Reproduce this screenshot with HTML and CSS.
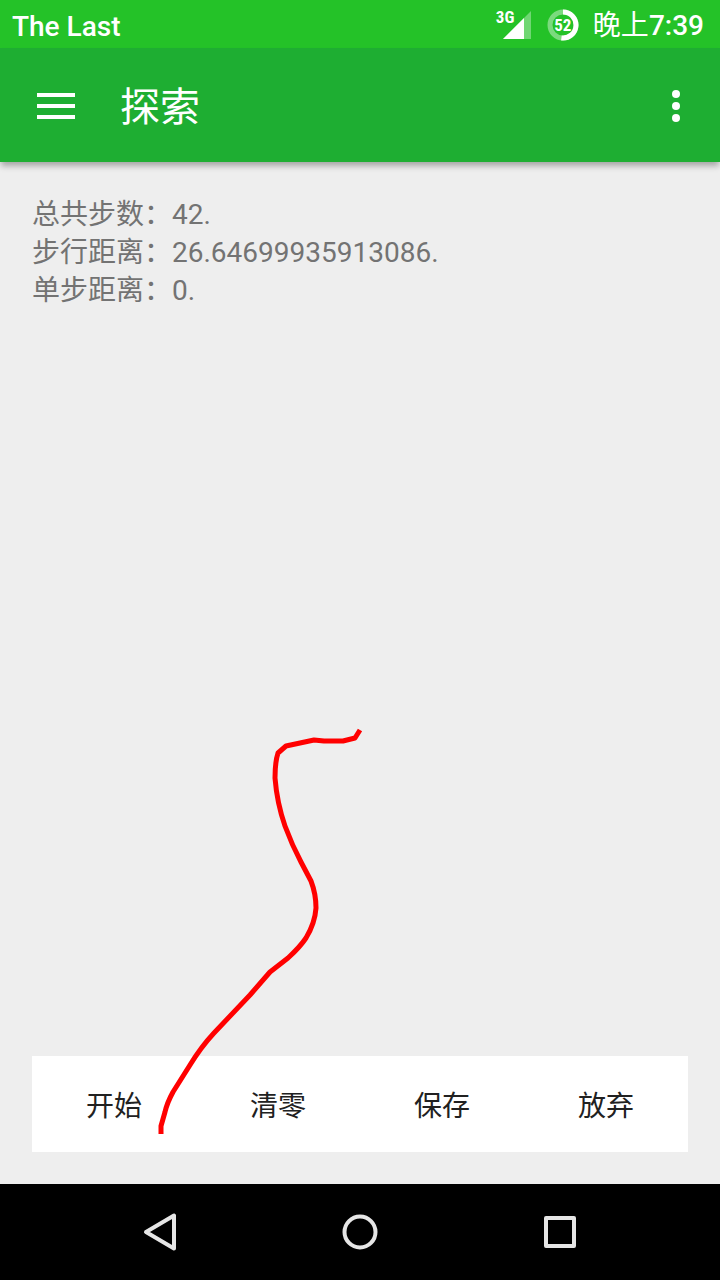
FILE: index.html
```
<!DOCTYPE html>
<html lang="zh-CN">
<head>
    <meta charset="UTF-8">
    <meta name="viewport" content="width=device-width, initial-scale=1">
    <title>探索</title>
    <link rel="stylesheet" href="styles.css">
</head>
<body>
<div class="status-bar">
    <span class="carrier">The Last</span>
    <div class="signal">
        <span class="network">3G</span>
        <svg width="28" height="28" viewBox="0 0 28 28">
            <path d="M0 28L28 0V28z" fill="#fff" fill-opacity=".35"/>
            <path d="M0 28L21 7V28z" fill="#fff"/>
        </svg>
    </div>
    <div class="battery">
        <svg width="32" height="32" viewBox="0 0 32 32" fill="none" stroke="#fff" stroke-width="5">
            <circle cx="16" cy="16" r="13" stroke-opacity=".4"/>
            <path d="M16 3A13 13 0 1 1 14.400 28.900"/>
        </svg>
        <span class="level">52</span>
    </div>
    <span class="clock"><span class="period">晚上</span>7:39</span>
</div>

<header class="toolbar">
    <button class="icon-btn" aria-label="菜单">
        <svg width="38" height="26" viewBox="0 0 38 26" fill="#fff">
            <path d="M0 0h38v4H0zM0 11h38v4H0zM0 22h38v4H0z"/>
        </svg>
    </button>
    <h1 class="title">探索</h1>
    <button class="icon-btn" aria-label="更多">
        <svg width="8" height="32" viewBox="0 0 8 32" fill="#fff">
            <circle cx="4" cy="4" r="4"/>
            <circle cx="4" cy="16" r="4"/>
            <circle cx="4" cy="28" r="4"/>
        </svg>
    </button>
</header>

<main class="content">
    <div class="info">
        <p>总共步数：42.</p>
        <p>步行距离：26.64699935913086.</p>
        <p>单步距离：0.</p>
    </div>
    <div class="actions">
        <button>开始</button>
        <button>清零</button>
        <button>保存</button>
        <button>放弃</button>
    </div>
    <!-- 行走轨迹 -->
    <svg class="track" viewBox="0 162 720 1022">
        <path d="M360 730L355 738L343 741H324L314 740L286 746L278 753Q275 762 275 778Q277 803 285 826Q292 845 301 862L311 881Q316 894 316 908Q315 923 306 938Q300 947 288 958L270 972L250 995L214 1033Q201 1047 190 1065L173 1092Q167 1103 165 1112L161 1126V1134"/>
    </svg>
</main>

<nav class="nav-bar">
    <button aria-label="返回">
        <svg width="36" height="40" viewBox="0 0 36 40"><path d="M4 20L32 3.500V36.500z"/></svg>
    </button>
    <button aria-label="主页">
        <svg width="36" height="40" viewBox="0 0 36 40"><circle cx="18" cy="20" r="15.500"/></svg>
    </button>
    <button aria-label="最近任务">
        <svg width="36" height="40" viewBox="0 0 36 40"><rect x="4" y="6" width="28" height="28"/></svg>
    </button>
</nav>
</body>
</html>
```
FILE: styles.css
```
* { box-sizing:border-box;margin:0;padding:0;}
body { display:flex;flex-direction:column;min-height:100vh;background:#eee;font-family:Roboto,"Noto Sans CJK SC",sans-serif;font-size:28px;}
button { border:none;background:none;font:inherit;color:inherit;cursor:pointer;}
svg { display:block;}

.status-bar { display:flex;align-items:center;height:48px;padding:2px 16px 0 12px;background:#24c228;color:#fff;font-weight:500;}
.carrier { flex:1;padding-top:2px;}
.signal { position:relative;padding:0 0 0 7px;margin-right:16px;}
.network { position:absolute;left:0;top:-4px;font-size:17px;line-height:20px;font-family:"Roboto Condensed",Roboto,sans-serif;font-weight:700;}
.battery { position:relative;margin-right:14px;}
.level { position:absolute;left:0;right:0;top:6px;text-align:center;font-size:17px;line-height:20px;font-family:"Roboto Condensed",Roboto,sans-serif;font-weight:700;}
.clock { line-height:48px;padding-top:2px;}
.period { font-weight:400;}

.toolbar { display:flex;align-items:center;height:114px;padding:2px 40px 0 37px;background:#1eae32;color:#fff;box-shadow:0 5px 6px -1px rgba(0,0,0,.3);z-index:1;}
.title { flex:1;padding-top:4px;margin-left:45px;font-size:40px;font-weight:400;line-height:60px;}

.content { position:relative;flex:1;display:flex;flex-direction:column;justify-content:space-between;padding:34px 32px 32px;}
.info { color:#737373;line-height:38px;}
.actions { display:flex;height:96px;background:#fff;color:#212121;}
.actions button { flex:1;}
.track { position:absolute;left:0;top:0;width:100%;height:100%;fill:none;stroke:#f00;stroke-width:5;stroke-linejoin:round;pointer-events:none;}

.nav-bar { display:flex;height:96px;padding:0 60px;background:#000;}
.nav-bar button { flex:1;display:flex;align-items:center;justify-content:center;}
.nav-bar svg { fill:none;stroke:#e6e6e6;stroke-width:4;stroke-linejoin:round;}
```
